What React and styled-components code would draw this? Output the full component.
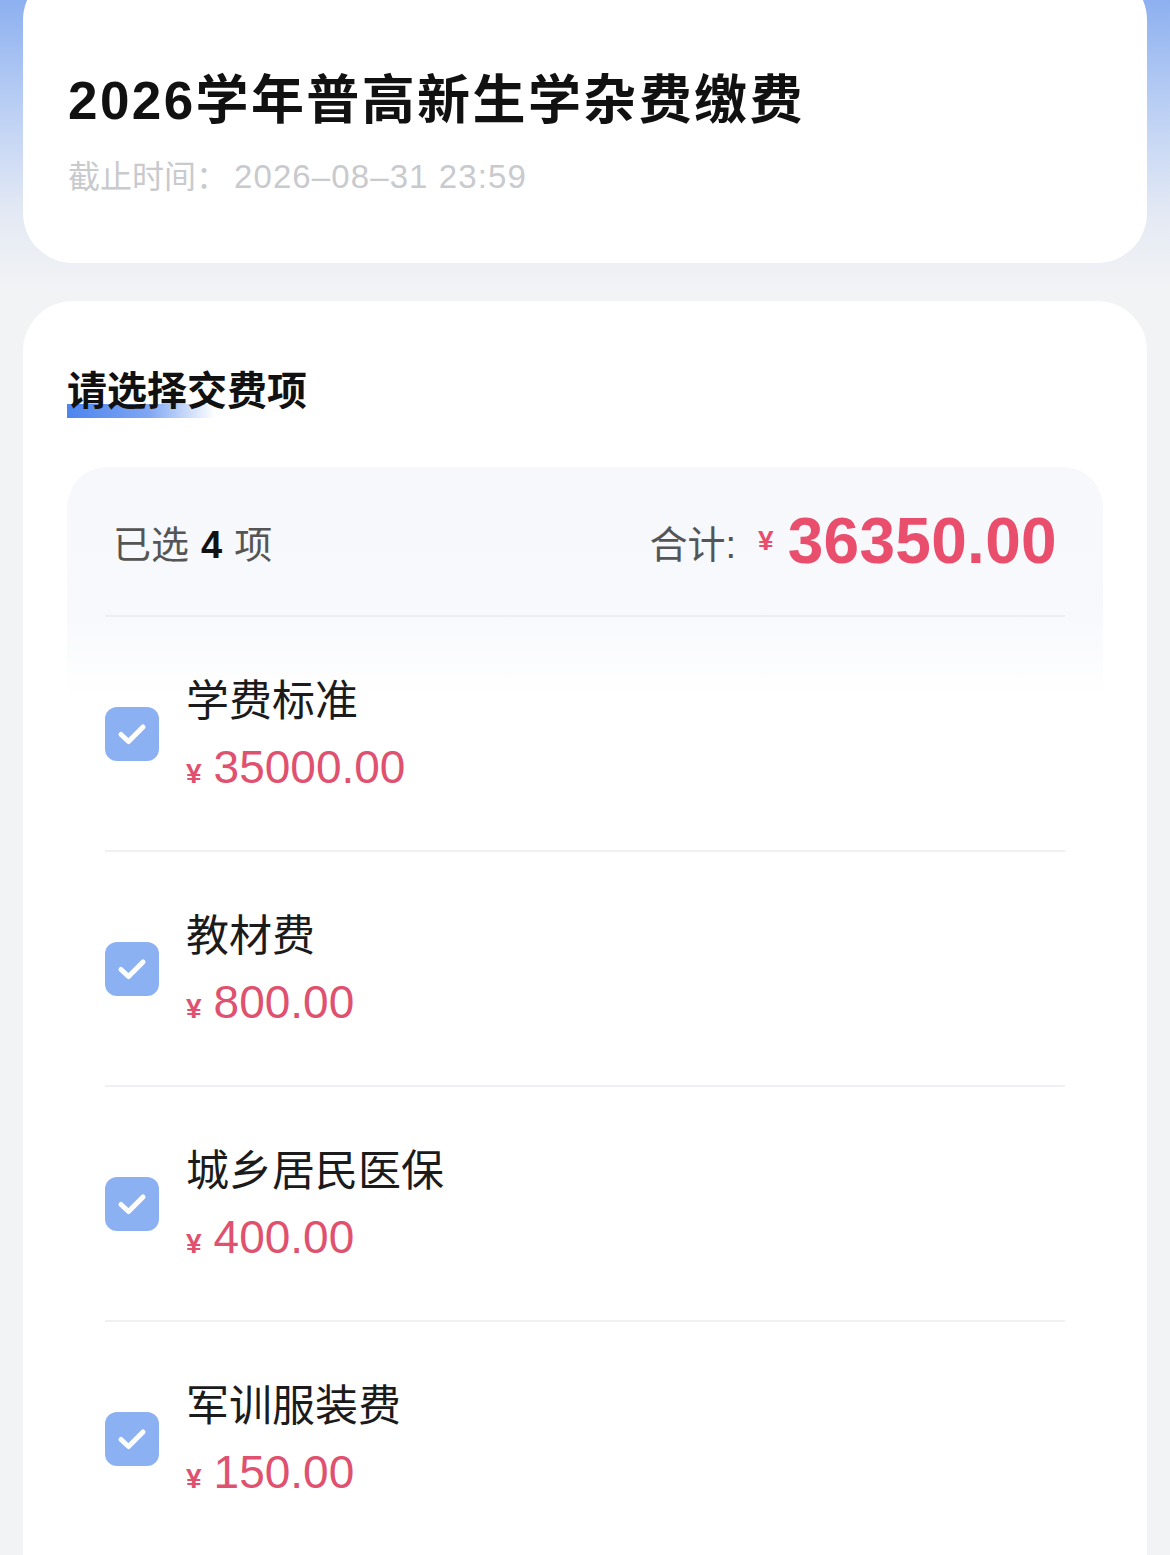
import React from "react";
import styled, { createGlobalStyle } from "styled-components";

const Global = createGlobalStyle`
  html, body { margin: 0; padding: 0; }
  *, *::before, *::after { box-sizing: border-box; }
  body {
    background: linear-gradient(180deg, #8db0f0 0px, #bcd0f4 110px, #e3e9f4 210px, #f2f3f5 290px, #f2f3f5 100%);
    background-repeat: no-repeat;
    background-color: #f2f3f5;
    font-family: "Liberation Sans", "Noto Sans CJK SC", sans-serif;
    overflow: hidden;
  }
`;

const Page = styled.div`
  width: 1170px;
  padding: 0 23px;
  display: flex;
  flex-direction: column;
  gap: 38px;
`;

const HeaderCard = styled.div`
  margin-top: -30px;
  background: #fff;
  border-radius: 50px;
  padding: 95px 45px 64px;
  display: flex;
  flex-direction: column;
  gap: 18px;
`;

const Title = styled.h1`
  margin: 0;
  font-size: 53px;
  line-height: 72px;
  font-weight: 700;
  color: #111;
  letter-spacing: 2.4px;
`;

const Deadline = styled.div`
  font-size: 32px;
  line-height: 44px;
  color: #c9cacd;
`;

const DeadlineValue = styled.span`
  font-size: 33px;
  letter-spacing: 1.1px;
  margin-left: 6px;
`;

const SelectCard = styled.div`
  background: #fff;
  border-radius: 50px 50px 0 0;
  padding: 64px 44px 200px;
  display: flex;
  flex-direction: column;
  gap: 50px;
`;

const Heading = styled.h2`
  position: relative;
  margin: 0;
  align-self: flex-start;
  font-size: 40px;
  line-height: 52px;
  font-weight: 700;
  color: #111;
  z-index: 0;
  &::before {
    content: "";
    position: absolute;
    left: 0;
    bottom: -1px;
    width: 148px;
    height: 14px;
    background: linear-gradient(90deg, #4d84ee 0%, #7ea6f3 55%, rgba(180, 205, 250, 0) 100%);
    z-index: -1;
  }
`;

const Summary = styled.div`
  border-radius: 40px 40px 0 0;
  background: linear-gradient(180deg, #f6f8fc 0px, #f8f9fd 150px, #ffffff 230px);
  padding: 0 38px;
  display: flex;
  flex-direction: column;
`;

const SummaryRow = styled.div`
  height: 150px;
  display: flex;
  align-items: center;
  justify-content: space-between;
  padding: 0 8px;
  border-bottom: 2px solid #eceef3;
`;

const Count = styled.div`
  font-size: 38px;
  color: #555;
  display: flex;
  align-items: baseline;
  gap: 12px;
`;

const CountNum = styled.span`
  color: #111;
  font-weight: 700;
`;

const Total = styled.div`
  display: flex;
  align-items: center;
  color: #555;
  font-size: 38px;
`;

const Yen = styled.span`
  color: ${(p) => p.$color};
  font-size: ${(p) => p.$size}px;
  font-weight: 700;
  margin: 0 ${(p) => p.$gap}px 0 0;
`;

const TotalLabel = styled.span`
  margin-right: 22px;
`;

const TotalAmount = styled.span`
  color: #e94f6d;
  font-size: 64px;
  font-weight: 700;
  letter-spacing: 0.3px;
`;

const Item = styled.div`
  height: 235px;
  display: flex;
  align-items: center;
  gap: 27px;
  border-bottom: 2px solid #eef0f3;
`;

const Check = styled.div`
  width: 54px;
  height: 54px;
  border-radius: 12px;
  background: #8bb1f2;
  display: flex;
  align-items: center;
  justify-content: center;
  flex-shrink: 0;
`;

const ItemText = styled.div`
  display: flex;
  flex-direction: column;
  gap: 6px;
  margin-top: 9px;
`;

const ItemName = styled.div`
  font-size: 43px;
  line-height: 58px;
  color: #1b1b1b;
`;

const ItemPrice = styled.div`
  display: flex;
  align-items: baseline;
  line-height: 62px;
`;

const PriceNum = styled.span`
  font-size: 46px;
  color: #e0516f;
`;

const items = [
  { name: "学费标准", price: "35000.00" },
  { name: "教材费", price: "800.00" },
  { name: "城乡居民医保", price: "400.00" },
  { name: "军训服装费", price: "150.00" },
];

function CheckIcon() {
  return (
    <svg width="34" height="34" viewBox="0 0 34 34" fill="none">
      <path d="M6 17.5 L13.5 24.5 L28 10" stroke="#fff" strokeWidth="5" strokeLinecap="round" strokeLinejoin="round" />
    </svg>
  );
}

export default function App() {
  return (
    <>
      <Global />
      <Page>
        <HeaderCard>
          <Title>2026学年普高新生学杂费缴费</Title>
          <Deadline>
            截止时间：<DeadlineValue>2026–08–31 23:59</DeadlineValue>
          </Deadline>
        </HeaderCard>
        <SelectCard>
          <Heading>请选择交费项</Heading>
          <Summary>
            <SummaryRow>
              <Count>
                <span>已选</span>
                <CountNum>4</CountNum>
                <span>项</span>
              </Count>
              <Total>
                <TotalLabel>合计:</TotalLabel>
                <Yen $color="#e94f6d" $size={28} $gap={14}>¥</Yen>
                <TotalAmount>36350.00</TotalAmount>
              </Total>
            </SummaryRow>
            {items.map((it) => (
              <Item key={it.name}>
                <Check>
                  <CheckIcon />
                </Check>
                <ItemText>
                  <ItemName>{it.name}</ItemName>
                  <ItemPrice>
                    <Yen $color="#e0516f" $size={28} $gap={12}>¥</Yen>
                    <PriceNum>{it.price}</PriceNum>
                  </ItemPrice>
                </ItemText>
              </Item>
            ))}
          </Summary>
        </SelectCard>
      </Page>
    </>
  );
}
